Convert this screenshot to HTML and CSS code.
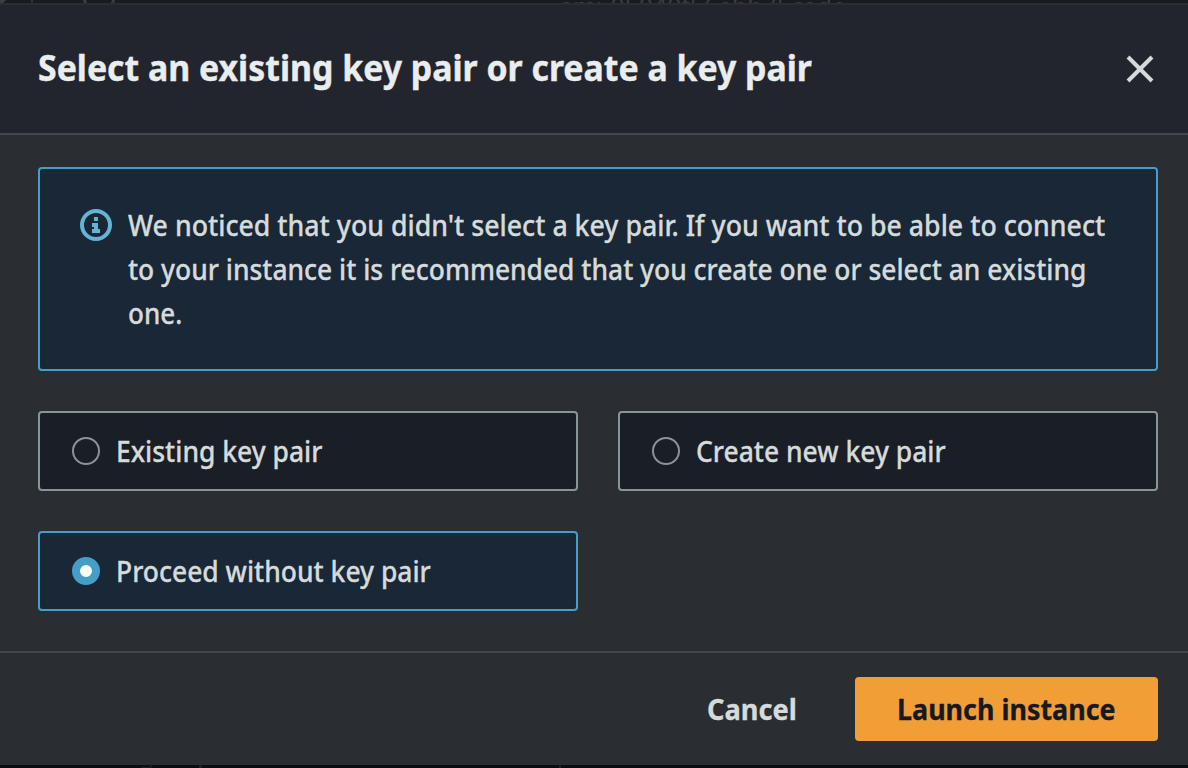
FILE: index.html
```html
<!DOCTYPE html>
<html lang="en">
<head>
<meta charset="utf-8">
<title>Select a key pair</title>
<link rel="stylesheet" href="styles.css">
</head>
<body>
<div class="backdrop-top">
  <svg class="backdrop-marks" width="130" height="3" viewBox="0 0 130 3" aria-hidden="true">
    <path d="M0 0h6l-3 3h-3zM83 0h3l1 3h-3zM112 0h3l-1 3h-3z" fill="#3c3e42"/>
    <path d="M31 0h2v3h-2z" fill="#303135"/>
  </svg>
  <span class="backdrop-ami">ami-05040f56abb75cade</span>
</div>
<section class="modal" role="dialog" aria-modal="true">
  <header class="modal-header">
    <h2 class="modal-title"><span class="fit fit-title">Select an existing key pair or create a key pair</span></h2>
    <button class="close" aria-label="Close">
      <svg width="32" height="32" viewBox="0 0 32 32"><path d="M4 4 28 28M28 4 4 28" fill="none" stroke="#d5dbdb" stroke-width="4"/></svg>
    </button>
  </header>
  <div class="modal-body">
    <div class="alert">
      <svg class="alert-icon" width="32" height="32" viewBox="0 0 32 32">
        <circle cx="16" cy="16" r="14" fill="none" stroke="#62b5d4" stroke-width="4"/>
        <path d="M14 8h4v4h-4zM12 14h6v6h2v4h-8v-4h2v-2h-2z" fill="#62b5d4"/>
      </svg>
      <p class="alert-text">
        <span class="fit fit-a1">We noticed that you didn't select a key pair. If you want to be able to connect</span>
        <span class="fit fit-a2">to your instance it is recommended that you create one or select an existing</span>
        <span class="fit fit-a3">one.</span>
      </p>
    </div>
    <div class="tiles">
      <label class="tile"><i class="radio"></i><span class="fit fit-tile">Existing key pair</span></label>
      <label class="tile"><i class="radio"></i><span class="fit fit-tile">Create new key pair</span></label>
      <label class="tile tile-selected"><i class="radio radio-on"></i><span class="fit fit-tile">Proceed without key pair</span></label>
    </div>
  </div>
  <footer class="modal-footer">
    <button class="btn btn-link"><span class="fit fit-cancel">Cancel</span></button>
    <button class="btn btn-primary"><span class="fit fit-launch">Launch instance</span></button>
  </footer>
</section>
<div class="backdrop-bottom">
  <svg width="600" height="3" viewBox="0 0 600 3" aria-hidden="true"><path d="M141 2h8l2-2h2l-2 3h-10zM199 0h3v3h-3zM559 0h2v3h-2z" fill="#17222c"/></svg>
</div>
</body>
</html>
```

FILE: styles.css
```css
* { box-sizing: border-box; }
body {
  margin: 0;
  height: 768px;
  overflow: hidden;
  display: flex;
  flex-direction: column;
  background: #16181d;
  color: #d5dbdb;
  font-family: "Noto Sans", "Open Sans", sans-serif;
  font-size: 28px;
  font-weight: 500;
  line-height: 44px;
}
.backdrop-top { height: 3px; overflow: hidden; display: flex; background: #191b20; flex: none; }
.backdrop-marks { flex: none; }
.backdrop-ami {
  margin: -16px 0 0 429px;
  color: #3c3e42;
  font-weight: 400;
  white-space: nowrap;
  transform: scaleX(.885);
  transform-origin: 0 50%;
}
.modal { height: 762px; flex: none; background: #2a2e33; display: flex; flex-direction: column; }
.modal-header {
  height: 132px;
  padding: 0 30px 2px 38px;
  display: flex;
  align-items: center;
  justify-content: space-between;
  background: #22252d;
  border-top: 2px solid #2a2e33;
  border-bottom: 2px solid #414750;
}
.modal-title { margin: 0; font-size: 36px; font-weight: 700; color: #eaeded; -webkit-text-stroke: .4px; }
.fit { display: inline-block; white-space: nowrap; transform-origin: 0 50%; }
.fit-title { transform: scaleX(.9395); }
.fit-a1 { transform: scaleX(.954); }
.fit-a2 { transform: scaleX(.943); }
.fit-a3 { transform: scaleX(.93); }
.fit-tile { transform: scaleX(.945); }
.fit-cancel { transform: scaleX(.972); }
.fit-launch { transform: scaleX(.96); }
.close { border: 0; padding: 0; background: none; width: 36px; height: 32px; margin-top: 2px; }
.close svg { display: block; margin: 0 auto; }
.modal-body { height: 516px; padding: 32px 30px 0 38px; }
.alert {
  height: 204px;
  padding: 34px 40px;
  display: flex;
  gap: 16px;
  background: #192737;
  border: 2px solid #449ec8;
  border-radius: 4px;
}
.alert-icon { margin-top: 6px; flex: none; }
.alert-text {
  margin: 0;
  display: flex;
  flex-direction: column;
  align-items: flex-start;
  -webkit-text-stroke: .3px;
}
.tiles { display: grid; grid-template-columns: 540px 540px; gap: 40px; margin-top: 40px; }
.tile {
  height: 80px;
  padding: 0 32px;
  display: flex;
  align-items: center;
  gap: 16px;
  background: #1a1e26;
  border: 2px solid #879596;
  border-radius: 4px;
  -webkit-text-stroke: .3px;
}
.tile-selected { background: #192737; border-color: #449ec8; }
.radio { width: 28px; height: 28px; border: 2px solid #879596; border-radius: 50%; }
.radio-on { border: 8px solid #449ec8; background: #fff; }
.modal-footer {
  height: 114px;
  padding: 0 30px 0 0;
  display: flex;
  align-items: center;
  justify-content: flex-end;
  border-top: 2px solid #414750;
}
.btn {
  height: 64px;
  border: 0;
  border-radius: 4px;
  font: inherit;
  font-weight: 700;
  padding: 0;
  text-align: left;
  -webkit-text-stroke: .3px;
}
.btn-link { width: 148px; background: none; color: #d5dbdb; }
.btn-primary { width: 303px; background: #f19e37; color: #16191f; padding-left: 42px; }
.backdrop-bottom { height: 3px; overflow: hidden; background: #0b0d11; }
.backdrop-bottom svg { display: block; }
```
